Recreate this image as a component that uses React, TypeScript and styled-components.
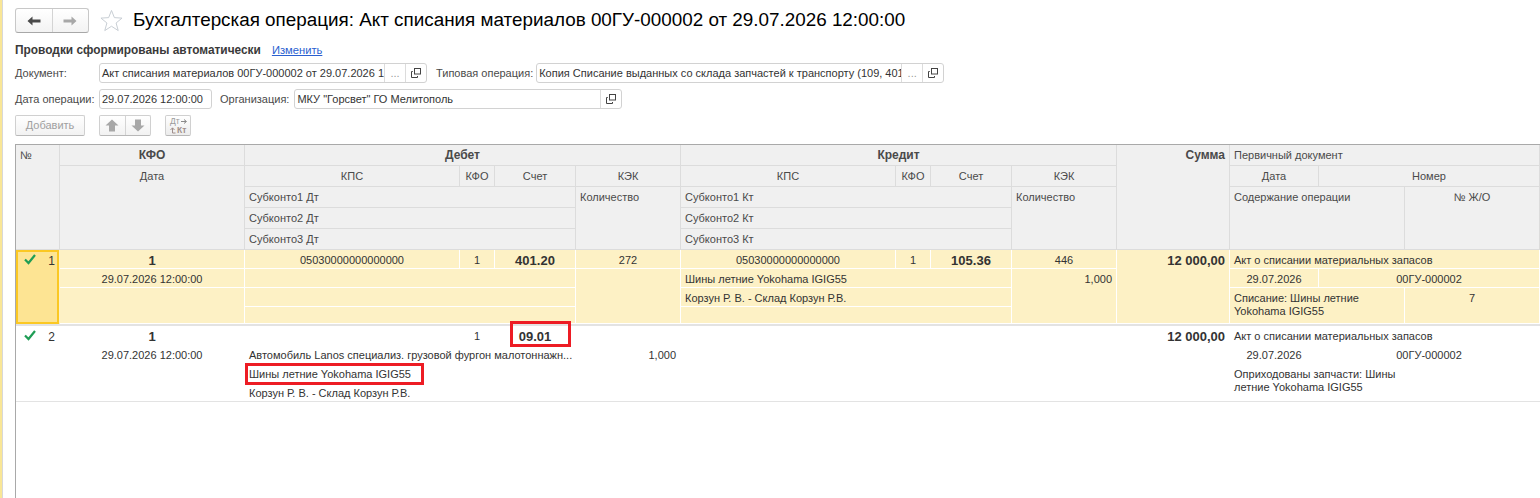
import React from "react";
import styled, { createGlobalStyle } from "styled-components";

const Global = createGlobalStyle`
  html, body { margin: 0; padding: 0; background: #fff; height: 498px; overflow: hidden; }
  body { font-family: "Liberation Sans", Arial, sans-serif; font-size: 11px; color: #3c3c3c; }
  * { box-sizing: border-box; }
`;

const Page = styled.div`
  display: flex; height: 498px; width: 1540px; overflow: hidden;
`;
const Stripe = styled.div`
  width: 3px; flex: none; background: #f9e696; border-right: 1px solid #d8d8d8;
`;
const Content = styled.div`
  flex: 1; min-width: 0; padding: 8px 0 0 12px; display: flex; flex-direction: column;
`;
const TitleBar = styled.div`
  display: flex; align-items: flex-start; height: 26px;
`;
const NavGroup = styled.div`
  display: flex; width: 74px; height: 25px; border: 1px solid #c8c8c8; border-bottom-color: #a8a8a8;
  border-radius: 3px; background: linear-gradient(#ffffff, #f3f3f3);
`;
const NavButton = styled.div<{ $sep?: boolean }>`
  flex: 1; display: flex; align-items: center; justify-content: center;
  border-right: ${(p) => (p.$sep ? "1px solid #d4d4d4" : "none")};
`;
const StarBox = styled.div`
  width: 23px; height: 23px; margin: 1px 0 0 11px; display: flex; align-items: center; justify-content: center;
`;
const Title = styled.h1`
  margin: 0 0 0 10px; font-size: 18.85px; font-weight: 400; color: #000; white-space: nowrap; line-height: 24px;
`;
const StatusRow = styled.div`
  display: flex; align-items: center; height: 14px; margin-top: 9px; gap: 11px;
`;
const Strong = styled.span`
  font-weight: 700; color: #3a3a3a; font-size: 11.9px;
`;
const Link = styled.a`
  color: #2a5fd0; text-decoration: underline; font-size: 11.2px;
`;
const FormRow = styled.div<{ $mt: number }>`
  display: flex; align-items: center; height: 20px; margin-top: ${(p) => p.$mt}px;
`;
const Label = styled.span<{ $w?: number; $ml?: number; $mr?: number }>`
  flex: none; width: ${(p) => (p.$w ? `${p.$w}px` : "auto")}; margin-left: ${(p) => p.$ml ?? 0}px;
  margin-right: ${(p) => p.$mr ?? 0}px; color: #4a4a4a; white-space: nowrap;
`;
const Field = styled.div<{ $w: number }>`
  flex: none; display: flex; width: ${(p) => p.$w}px; height: 20px; border: 1px solid #d2d2d2;
  border-radius: 3px; background: #fff; overflow: hidden;
`;
const FieldText = styled.div`
  flex: 1; min-width: 0; padding-left: 2px; line-height: 18px; white-space: nowrap; overflow: hidden;
  color: #333;
`;
const FieldButton = styled.div`
  flex: none; width: 21px; border-left: 1px solid #dcdcdc; display: flex; align-items: center;
  justify-content: center; color: #9a9a9a; line-height: 18px;
`;
const ButtonRow = styled.div`
  display: flex; align-items: center; height: 21px; margin-top: 6px;
`;
const GreyButton = styled.div`
  width: 70px; height: 21px; border: 1px solid #d0d0d0; border-bottom-color: #b8b8b8; border-radius: 2px;
  background: linear-gradient(#fff, #f2f2f2); color: #a0a0a0; text-align: center; line-height: 19px; font-size: 11px;
`;
const ArrowGroup = styled.div`
  display: flex; width: 52px; height: 21px; margin-left: 14px; border: 1px solid #d0d0d0; border-bottom-color: #b8b8b8;
  border-radius: 2px; background: linear-gradient(#fff, #f2f2f2);
`;
const ArrowButton = styled.div<{ $sep?: boolean }>`
  flex: 1; display: flex; align-items: center; justify-content: center;
  border-right: ${(p) => (p.$sep ? "1px solid #d4d4d4" : "none")};
`;
const SwapButton = styled.div`
  width: 26px; height: 21px; margin-left: 14px; border: 1px solid #d0d0d0; border-bottom-color: #b8b8b8;
  border-radius: 2px; background: linear-gradient(#fff, #ececec); font-size: 8.5px; line-height: 9px;
  padding: 1px 0 0 4px;
`;
const SwapLine = styled.div<{ $b?: boolean }>`
  display: flex; align-items: center; gap: 1px;
  font-weight: ${(p) => (p.$b ? 700 : 400)}; color: ${(p) => (p.$b ? "#a08f8c" : "#9a9a9a")}; white-space: nowrap;
`;

const TRACKS = "44px 185px 215px 35px 81px 105px 215px 35px 81px 105px 113px 89px 86px 135px";

const Table = styled.div`
  margin-top: 8px; flex: 1; border-top: 1px solid #a9a9a9; border-left: 1px solid #a9a9a9;
`;
const Grid = styled.div<{ $rows: string; $bg: string; $line: string }>`
  display: grid; grid-template-columns: ${TRACKS}; grid-template-rows: ${(p) => p.$rows};
  background: ${(p) => p.$bg}; --line: ${(p) => p.$line};
`;
const Cell = styled.div<{ $c: string; $r: string; $a?: string; $b?: boolean; $wrap?: boolean }>`
  grid-column: ${(p) => p.$c}; grid-row: ${(p) => p.$r};
  text-align: ${(p) => p.$a ?? "left"}; font-weight: ${(p) => (p.$b ? 700 : 400)};
  border-right: 1px solid var(--line);
  border-bottom: 1px solid var(--line);
  padding: 4px 4px 0 4px; line-height: 13px; min-width: 0; overflow: hidden;
  white-space: ${(p) => (p.$wrap ? "normal" : "nowrap")};
`;
const Head = styled(Cell)`
  color: #4a4a4a;
  font-size: ${(p) => (p.$b ? 12 : 11)}px;
`;
const BodyCell = styled(Cell)<{ $big?: boolean }>`
  color: #333;
  font-size: ${(p) => (p.$big ? 13 : 11)}px;
`;
const RowSep = styled.div<{ $h: number }>`
  height: ${(p) => p.$h}px; background: #e3e3e3;
`;
const Marker = styled.div<{ $active?: boolean }>`
  grid-column: 1; grid-row: 1 / 5; display: flex; justify-content: space-between; align-items: flex-start;
  padding: 2px 2px 0 6px; color: #333; line-height: 15px; font-size: 12px;
  background: ${(p) => (p.$active ? "#fde493" : "transparent")};
  border: 2px solid ${(p) => (p.$active ? "#fbc823" : "transparent")};
  margin-right: 1px;
`;
const Highlight = styled.div<{ $w: number; $h: number; $x: number; $y: number }>`
  position: absolute; left: ${(p) => p.$x}px; top: ${(p) => p.$y}px;
  width: ${(p) => p.$w}px; height: ${(p) => p.$h}px; border: 3px solid #ed1c24;
`;
const Body = styled.div`
  position: relative;
`;

const Arrow = ({ dir, color }: { dir: "l" | "r"; color: string }) => (
  <svg width="14" height="10" viewBox="0 0 14 10">
    <path
      d={dir === "l" ? "M0.5 5 L5.5 0.5 V3.5 H13.5 V6.5 H5.5 V9.5 Z" : "M13.5 5 L8.5 0.5 V3.5 H0.5 V6.5 H8.5 V9.5 Z"}
      fill={color}
    />
  </svg>
);
const Star = () => (
  <svg width="23" height="23" viewBox="0 0 24 24">
    <path d="M12 1.5 L15 9 L23 9.5 L16.8 14.6 L19 22.5 L12 18 L5 22.5 L7.2 14.6 L1 9.5 L9 9 Z" fill="#fff" stroke="#c6ccd2" strokeWidth="1" />
  </svg>
);
const OpenIcon = () => (
  <svg width="10" height="10" viewBox="0 0 10 10">
    <rect x="3.5" y="0.5" width="6" height="5.5" fill="none" stroke="#444" />
    <path d="M1.8 3.5 H0.5 V9.5 H6.5 V8" fill="none" stroke="#444" />
  </svg>
);
const Vert = ({ up }: { up: boolean }) => (
  <svg width="14" height="13" viewBox="0 0 14 13">
    <path d={up ? "M7 0.5 L13.5 6.5 H10 V12.5 H4 V6.5 H0.5 Z" : "M7 12.5 L13.5 6.5 H10 V0.5 H4 V6.5 H0.5 Z"} fill="#a8a8a8" />
  </svg>
);
const Check = () => (
  <svg width="12" height="11" viewBox="0 0 12 11">
    <path d="M1 5.5 L4.5 9 L11 1" fill="none" stroke="#1f9d55" strokeWidth="2.2" />
  </svg>
);
const SmallRight = () => (
  <svg width="6" height="5" viewBox="0 0 6 5"><path d="M0 2.5 H5 M3 0.5 L5.5 2.5 L3 4.5" fill="none" stroke="#8a8a8a" /></svg>
);
const SmallLeft = () => (
  <svg width="6" height="7" viewBox="0 0 6 7"><path d="M5.5 6 H2.5 V1 M0.5 3 L2.5 0.8 L4.5 3" fill="none" stroke="#a08f8c" /></svg>
);

const ROWS1 = "19px 19px 19px 17px";
const ROWS2 = "19px 19px 19px 18px";

export default function App() {
  return (
    <Page>
      <Global />
      <Stripe />
      <Content>
        <TitleBar>
          <NavGroup>
            <NavButton $sep><Arrow dir="l" color="#4a4a4a" /></NavButton>
            <NavButton><Arrow dir="r" color="#a8a8a8" /></NavButton>
          </NavGroup>
          <StarBox><Star /></StarBox>
          <Title>Бухгалтерская операция: Акт списания материалов 00ГУ-000002 от 29.07.2026 12:00:00</Title>
        </TitleBar>
        <StatusRow>
          <Strong>Проводки сформированы автоматически</Strong>
          <Link>Изменить</Link>
        </StatusRow>
        <FormRow $mt={6}>
          <Label $w={84}>Документ:</Label>
          <Field $w={328}>
            <FieldText>Акт списания материалов 00ГУ-000002 от 29.07.2026 1</FieldText>
            <FieldButton>...</FieldButton>
            <FieldButton><OpenIcon /></FieldButton>
          </Field>
          <Label $ml={9} $mr={3}>Типовая операция:</Label>
          <Field $w={408}>
            <FieldText>Копия Списание выданных со склада запчастей к транспорту (109, 401</FieldText>
            <FieldButton>...</FieldButton>
            <FieldButton><OpenIcon /></FieldButton>
          </Field>
        </FormRow>
        <FormRow $mt={6}>
          <Label $w={84}>Дата операции:</Label>
          <Field $w={113}><FieldText>29.07.2026 12:00:00</FieldText></Field>
          <Label $ml={8} $mr={5}>Организация:</Label>
          <Field $w={328}>
            <FieldText>МКУ "Горсвет" ГО Мелитополь</FieldText>
            <FieldButton><OpenIcon /></FieldButton>
          </Field>
        </FormRow>
        <ButtonRow>
          <GreyButton>Добавить</GreyButton>
          <ArrowGroup>
            <ArrowButton $sep><Vert up /></ArrowButton>
            <ArrowButton><Vert up={false} /></ArrowButton>
          </ArrowGroup>
          <SwapButton>
            <SwapLine>Дт<SmallRight /></SwapLine>
            <SwapLine $b><SmallLeft />Кт</SwapLine>
          </SwapButton>
        </ButtonRow>
        <Table>
          <Grid $rows="21px 21px 21px 21px 21px" $bg="#f0f0f0" $line="#dcdcdc">
            <Head $c="1" $r="1 / 6">№</Head>
            <Head $c="2" $r="1" $a="center" $b>КФО</Head>
            <Head $c="2" $r="2 / 6" $a="center">Дата</Head>
            <Head $c="3 / 7" $r="1" $a="center" $b>Дебет</Head>
            <Head $c="3" $r="2" $a="center">КПС</Head>
            <Head $c="4" $r="2" $a="center">КФО</Head>
            <Head $c="5" $r="2" $a="center">Счет</Head>
            <Head $c="6" $r="2" $a="center">КЭК</Head>
            <Head $c="3 / 6" $r="3">Субконто1 Дт</Head>
            <Head $c="3 / 6" $r="4">Субконто2 Дт</Head>
            <Head $c="3 / 6" $r="5">Субконто3 Дт</Head>
            <Head $c="6" $r="3 / 6">Количество</Head>
            <Head $c="7 / 11" $r="1" $a="center" $b>Кредит</Head>
            <Head $c="7" $r="2" $a="center">КПС</Head>
            <Head $c="8" $r="2" $a="center">КФО</Head>
            <Head $c="9" $r="2" $a="center">Счет</Head>
            <Head $c="10" $r="2" $a="center">КЭК</Head>
            <Head $c="7 / 10" $r="3">Субконто1 Кт</Head>
            <Head $c="7 / 10" $r="4">Субконто2 Кт</Head>
            <Head $c="7 / 10" $r="5">Субконто3 Кт</Head>
            <Head $c="10" $r="3 / 6">Количество</Head>
            <Head $c="11" $r="1 / 6" $a="right" $b>Сумма</Head>
            <Head $c="12 / 15" $r="1">Первичный документ</Head>
            <Head $c="12" $r="2" $a="center">Дата</Head>
            <Head $c="13 / 15" $r="2" $a="center">Номер</Head>
            <Head $c="12 / 14" $r="3 / 6">Содержание операции</Head>
            <Head $c="14" $r="3 / 6" $a="center">№ Ж/О</Head>
          </Grid>
          <Body>
            <Grid $rows={ROWS1} $bg="#fdf1c5" $line="#ffffff">
              <Marker $active><Check /><span>1</span></Marker>
              <BodyCell $c="2" $r="1" $a="center" $b $big>1</BodyCell>
              <BodyCell $c="2" $r="2" $a="center">29.07.2026 12:00:00</BodyCell>
              <BodyCell $c="2" $r="3 / 5" />
              <BodyCell $c="3" $r="1" $a="center">05030000000000000</BodyCell>
              <BodyCell $c="4" $r="1" $a="center">1</BodyCell>
              <BodyCell $c="5" $r="1" $a="center" $b $big>401.20</BodyCell>
              <BodyCell $c="6" $r="1" $a="center">272</BodyCell>
              <BodyCell $c="3 / 6" $r="2" />
              <BodyCell $c="3 / 6" $r="3" />
              <BodyCell $c="3 / 6" $r="4" />
              <BodyCell $c="6" $r="2 / 5" />
              <BodyCell $c="7" $r="1" $a="center">05030000000000000</BodyCell>
              <BodyCell $c="8" $r="1" $a="center">1</BodyCell>
              <BodyCell $c="9" $r="1" $a="center" $b $big>105.36</BodyCell>
              <BodyCell $c="10" $r="1" $a="center">446</BodyCell>
              <BodyCell $c="7 / 10" $r="2">Шины летние Yokohama IGIG55</BodyCell>
              <BodyCell $c="7 / 10" $r="3">Корзун Р. В. - Склад Корзун Р.В.</BodyCell>
              <BodyCell $c="7 / 10" $r="4" />
              <BodyCell $c="10" $r="2 / 5" $a="right">1,000</BodyCell>
              <BodyCell $c="11" $r="1 / 5" $a="right" $b $big>12 000,00</BodyCell>
              <BodyCell $c="12 / 15" $r="1">Акт о списании материальных запасов</BodyCell>
              <BodyCell $c="12" $r="2" $a="center">29.07.2026</BodyCell>
              <BodyCell $c="13 / 15" $r="2" $a="center">00ГУ-000002</BodyCell>
              <BodyCell $c="12 / 14" $r="3 / 5" $wrap>Списание: Шины летние<br />Yokohama IGIG55</BodyCell>
              <BodyCell $c="14" $r="3 / 5" $a="center">7</BodyCell>
            </Grid>
            <RowSep $h={2} />
            <Grid $rows={ROWS2} $bg="#ffffff" $line="transparent">
              <Marker><Check /><span>2</span></Marker>
              <BodyCell $c="2" $r="1" $a="center" $b $big>1</BodyCell>
              <BodyCell $c="2" $r="2" $a="center">29.07.2026 12:00:00</BodyCell>
              <BodyCell $c="4" $r="1" $a="center">1</BodyCell>
              <BodyCell $c="5" $r="1" $a="center" $b $big>09.01</BodyCell>
              <BodyCell $c="3 / 6" $r="2">Автомобиль Lanos специализ. грузовой фургон малотоннажн...</BodyCell>
              <BodyCell $c="6" $r="2" $a="right">1,000</BodyCell>
              <BodyCell $c="3 / 6" $r="3">Шины летние Yokohama IGIG55</BodyCell>
              <BodyCell $c="3 / 6" $r="4">Корзун Р. В. - Склад Корзун Р.В.</BodyCell>
              <BodyCell $c="11" $r="1" $a="right" $b $big>12 000,00</BodyCell>
              <BodyCell $c="12 / 15" $r="1">Акт о списании материальных запасов</BodyCell>
              <BodyCell $c="12" $r="2" $a="center">29.07.2026</BodyCell>
              <BodyCell $c="13 / 15" $r="2" $a="center">00ГУ-000002</BodyCell>
              <BodyCell $c="12 / 14" $r="3 / 5" $wrap>Оприходованы запчасти: Шины<br />летние Yokohama IGIG55</BodyCell>
            </Grid>
            <RowSep $h={1} />
            <Highlight $x={494} $y={71} $w={61} $h={26} />
            <Highlight $x={229} $y={113} $w={179} $h={22} />
          </Body>
        </Table>
      </Content>
    </Page>
  );
}
